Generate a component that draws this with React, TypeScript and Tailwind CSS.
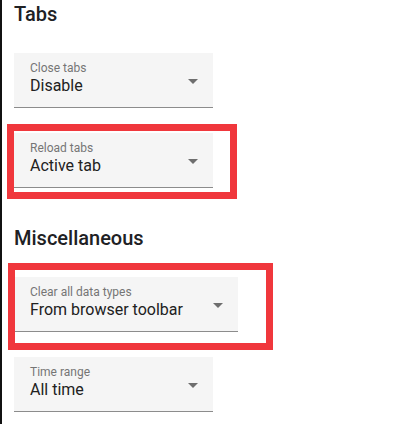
import React from "react";

function Select({ label, value, width }: { label: string; value: string; width: string }) {
  return (
    <div className={`mt-[25px] h-[55px] bg-[#f5f5f5] border-b border-[#8c8c8c] pl-4 pr-[15px] pt-[7px] flex ${width}`}>
      <div className="flex-1 flex flex-col">
        <div className="text-[12px] leading-[16px] text-[#757575]">{label}</div>
        <div className="text-[16px] leading-[20px] text-[#212121]">{value}</div>
      </div>
      <div className="mt-[19px] w-0 h-0 border-l-[5px] border-r-[5px] border-t-[5px] border-l-transparent border-r-transparent border-t-[#6e6e6e]" />
    </div>
  );
}

export default function App() {
  return (
    <div className="relative w-[414px] h-[424px] bg-white border-l-2 border-[#111] overflow-hidden font-['Roboto',sans-serif]">
      <div className="pl-[12px]">
        <h2 className="text-[20px] leading-[28px] font-medium text-[#202124]">Tabs</h2>
        <Select label="Close tabs" value="Disable" width="w-[199px]" />
        <Select label="Reload tabs" value="Active tab" width="w-[199px]" />
        <h2 className="mt-[36px] text-[20px] leading-[28px] font-medium text-[#202124]">Miscellaneous</h2>
        <Select label="Clear all data types" value="From browser toolbar" width="w-[224px]" />
        <Select label="Time range" value="All time" width="w-[199px]" />
      </div>
      <div className="absolute left-[5px] top-[124px] w-[230px] h-[75px] border-[7px] border-[#f0373c]" />
      <div className="absolute left-[6px] top-[263px] w-[265px] h-[87px] border-[7px] border-[#f0373c]" />
    </div>
  );
}
